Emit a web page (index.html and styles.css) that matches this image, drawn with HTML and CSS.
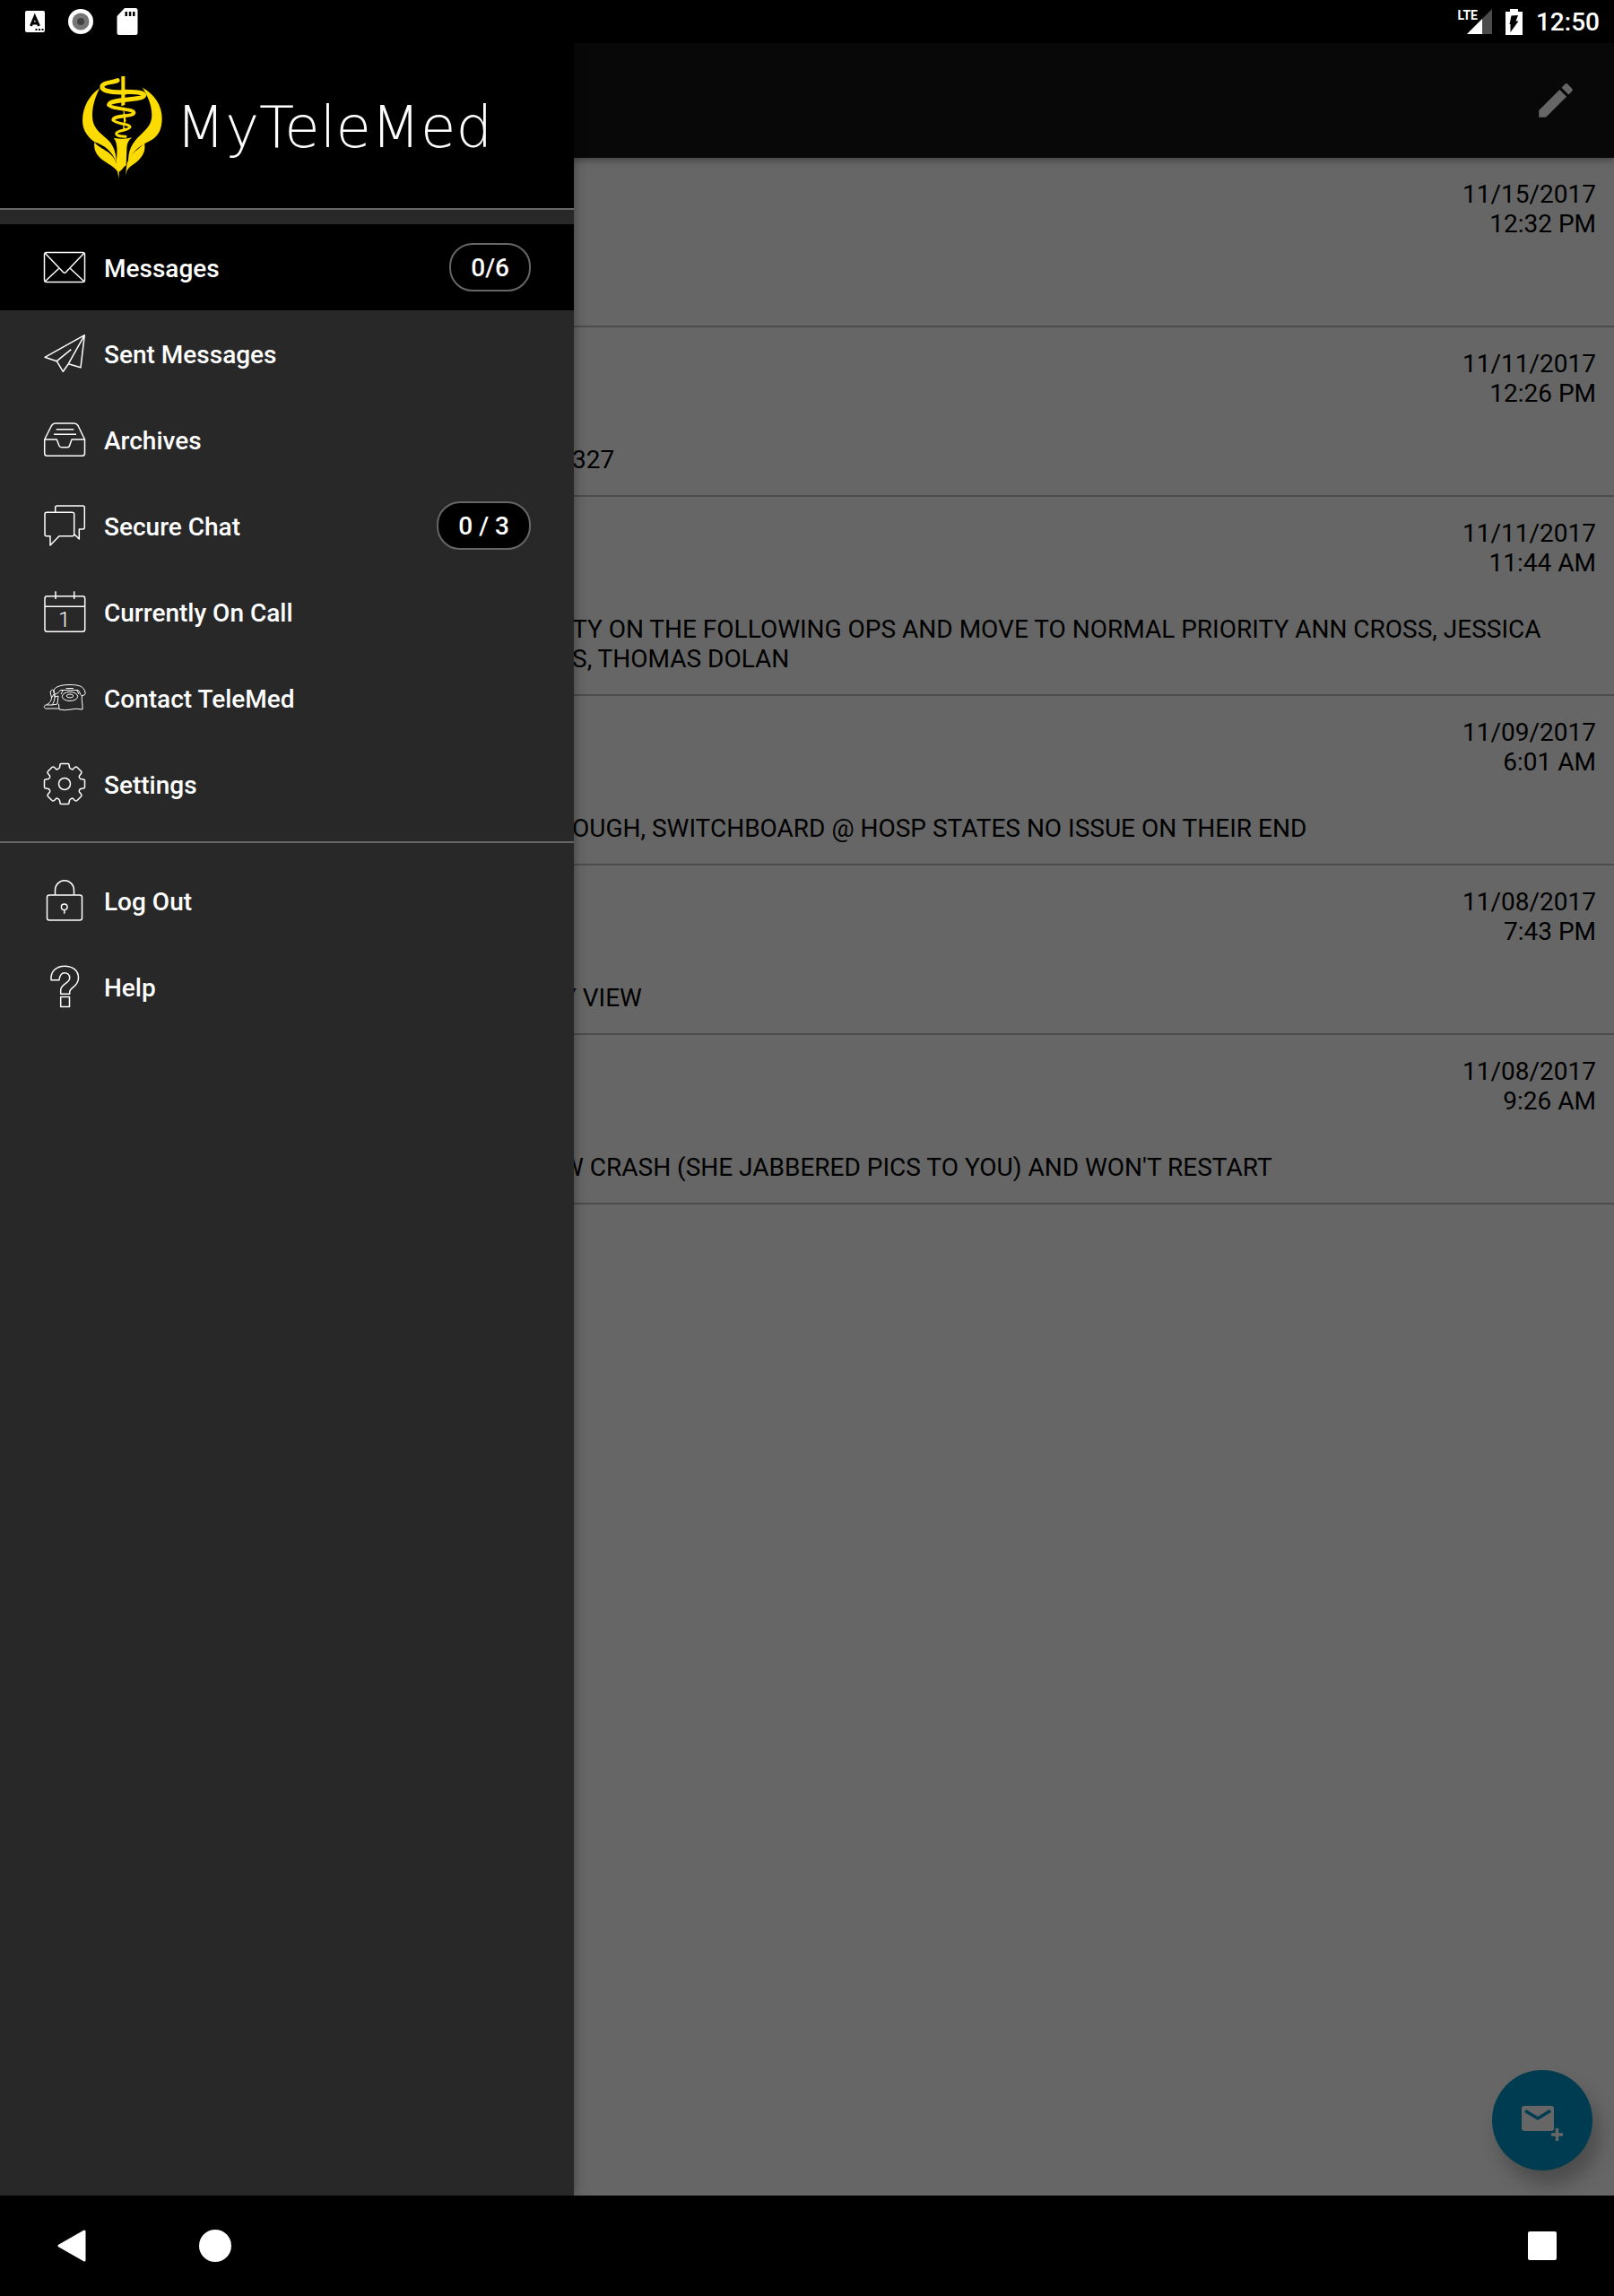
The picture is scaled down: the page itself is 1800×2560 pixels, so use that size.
FILE: index.html
```html
<!DOCTYPE html>
<html lang="en">
<head>
<meta charset="utf-8">
<meta name="viewport" content="width=device-width, initial-scale=1">
<title>MyTeleMed</title>
<link rel="stylesheet" href="styles.css">
</head>
<body>
<header class="status-bar">
  <div class="status-group status-notices">
    <svg width="22" height="24" viewBox="0 0 22 24" aria-hidden="true"><rect width="22" height="24" rx="2" fill="#fff"/><path d="M6.500 17L10.800 6.500L15.500 17M8 14H14" fill="none" stroke="#000" stroke-width="3"/><path d="M11.500 20h2v2h-2zM15 20h2v2h-2zM18.500 20h2v2h-2z"/></svg>
    <svg width="28" height="28" viewBox="0 0 28 28" aria-hidden="true"><circle cx="14" cy="14" r="14" fill="#fff"/><circle cx="14" cy="14" r="9.500" fill="#757575"/><circle cx="14" cy="14" r="4" fill="#424242"/></svg>
    <svg width="24" height="30" viewBox="0 0 24 30" aria-hidden="true"><path d="M9 0h12a2.500 2.500 0 0 1 2.500 2.500v25a2.500 2.500 0 0 1-2.500 2.500H3a2.500 2.500 0 0 1-2.500-2.500V9z" fill="#fff"/><path d="M9.500 4h2.500v5H9.500zM13.800 4h2.500v5h-2.500zM18 4h2.500v5H18z"/></svg>
  </div>
  <div class="status-group status-system">
    <div class="signal">
      <span class="network">LTE</span>
      <svg width="28" height="28" viewBox="0 0 28 28" aria-hidden="true"><path d="M0 28L28 0V28z" fill="#4c4c4c"/><path d="M0 28L17 11V28z" fill="#fff"/></svg>
    </div>
    <svg width="19" height="29" viewBox="0 0 19 29" aria-hidden="true"><path d="M5 0h9v3h5v26H0V3h5z" fill="#fff"/><path d="M6.500 7.500L14 7L11.500 13.500H14.500L5.500 26V17H4.500z"/></svg>
    <time class="clock">12:50</time>
  </div>
</header>

<div class="stage">
  <main class="content">
    <div class="app-bar">
      <button class="icon-button" type="button" aria-label="Edit">
        <svg width="50" height="50" viewBox="0 0 24 24" fill="#666" aria-hidden="true"><path d="M3 17.250V21h3.750L17.810 9.940l-3.750-3.750L3 17.250zM20.710 7.040a1 1 0 0 0 0-1.410l-2.340-2.340a1 1 0 0 0-1.410 0l-1.830 1.830 3.750 3.750 1.830-1.830z"/></svg>
      </button>
    </div>
    <ul class="message-list">
      <li class="message"><time class="when">11/15/2017<br>12:32 PM</time><p class="text"></p></li>
      <li class="message"><time class="when">11/11/2017<br>12:26 PM</time><p class="text">327</p></li>
      <li class="message"><time class="when">11/11/2017<br>11:44 AM</time><p class="text">TY ON THE FOLLOWING OPS AND MOVE TO NORMAL PRIORITY ANN CROSS, JESSICA<br>S, THOMAS DOLAN</p></li>
      <li class="message"><time class="when">11/09/2017<br>6:01 AM</time><p class="text">OUGH, SWITCHBOARD @ HOSP STATES NO ISSUE ON THEIR END</p></li>
      <li class="message"><time class="when">11/08/2017<br>7:43 PM</time><p class="text text-tucked">Y VIEW</p></li>
      <li class="message"><time class="when">11/08/2017<br>9:26 AM</time><p class="text text-tucked">W CRASH (SHE JABBERED PICS TO YOU) AND WON'T RESTART</p></li>
    </ul>
    <button class="fab" type="button" aria-label="New message">
      <svg width="48" height="48" viewBox="0 -8 48 48" aria-hidden="true"><rect x="1" width="36" height="28" rx="3" fill="#666"/><path d="M5 5.500L19 14L33 5.500" fill="none" stroke="#003c51" stroke-width="3.500"/><path d="M40.500 25v14M34 32h13" stroke="#666" stroke-width="3.500"/></svg>
    </button>
  </main>

  <aside class="drawer">
    <div class="brand">
      <svg class="brand-mark" width="92" height="118" viewBox="30 36 276 354" fill="#fcdb00" aria-hidden="true">
        <path d="M166 42h12v96l-12 4z"/>
        <path d="M172 142l10 50-8 10zM172 200l8 22-8 6z"/>
        <path d="M94 82C60 104 36 145 36 190C36 222 52 244 76 262C110 274 136 292 149 332C150 302 140 270 118 252C92 228 70 214 69 176C68 140 82 104 94 82z"/>
        <path d="M236 80C276 100 302 140 302 182C302 222 288 244 262 258C226 276 200 294 190 332C186 292 204 262 226 242C250 220 268 204 268 172C268 140 254 106 236 80z"/>
        <path d="M76 262C94 288 134 290 149 332L159 350L157 384L153 360C142 346 126 338 112 328C86 312 72 292 76 262z"/>
        <path d="M243 264C226 288 196 296 184 338L180 374L184 360C190 344 206 338 220 326C240 308 248 290 243 264z"/>
        <path d="M140 248C160 252 184 252 202 247C190 256 184 266 184 288L182 340C172 346 168 358 157 362L148 345C150 312 158 268 140 248z"/>
        <g fill="none" stroke="#fcdb00" stroke-linecap="round">
          <path d="M153 56C140 64 110 60 102 74C96 96 150 96 180 96" stroke-width="15"/>
          <path d="M170 94C210 94 242 96 242 106C240 122 128 118 125 137" stroke-width="15"/>
          <path d="M125 137C126 152 206 150 208 164C206 178 142 172 139 188" stroke-width="12"/>
          <path d="M139 188C142 202 194 200 195 212C192 224 150 222 149 234C150 244 166 242 180 244" stroke-width="9"/>
        </g>
      </svg>
      <h1 class="brand-name">MyTeleMed</h1>
    </div>
    <nav class="menu">
      <a class="menu-item is-active" href="#messages">
        <svg class="menu-icon" viewBox="0 0 48 48" aria-hidden="true"><rect x="1.500" y="7.500" width="45" height="33" rx="2.500"/><path d="M2.500 8.500L22.500 29.500Q24 31 25.500 29.500L45.500 8.500M2.500 39.500L17.500 25.500M45.500 39.500L30.500 25.500"/></svg>
        <span class="menu-label">Messages</span><span class="badge">0/6</span>
      </a>
      <a class="menu-item" href="#sent">
        <svg class="menu-icon" viewBox="0 0 48 48" aria-hidden="true"><path d="M46.300 3.700L2 28.300L15.300 32.700L22.300 44.300L28.300 35.700L42 39.700zM15.300 32.700L31.300 19.700M46.300 3.700L28.300 35.700"/></svg>
        <span class="menu-label">Sent Messages</span>
      </a>
      <a class="menu-item" href="#archives">
        <svg class="menu-icon" viewBox="0 0 48 48" aria-hidden="true"><path d="M1.700 24L9.500 8.500Q11 6 13.700 6H34.500Q37.500 6 39 8.500L46.500 24V39.500Q46.500 42.300 43.500 42.300H4.700Q1.700 42.300 1.700 39.500zM1.700 24H15.300L18 31Q18.700 32.700 20.500 32.700H27.500Q29 32.700 29.500 31L32 24H46.500M14.700 12.700H34.300M12 18.300H37"/></svg>
        <span class="menu-label">Archives</span>
      </a>
      <a class="menu-item" href="#chat">
        <svg class="menu-icon" viewBox="0 0 48 48" aria-hidden="true"><path d="M4 9.300H32.700Q34.700 9.300 34.700 11.300V33.700Q34.700 35.700 32.700 35.700H18L8 46V35.700H4Q2 35.700 2 33.700V11.300Q2 9.300 4 9.300zM13.700 9.300V4Q13.700 2 15.700 2H44.300Q46.300 2 46.300 4V26Q46.300 28 44.300 28H40.300V39L34.700 33.500"/></svg>
        <span class="menu-label">Secure Chat</span><span class="badge">0 / 3</span>
      </a>
      <a class="menu-item" href="#on-call">
        <svg class="menu-icon" viewBox="0 0 48 48" aria-hidden="true"><rect x="2" y="6.700" width="44.700" height="39.600" rx="2.500"/><path d="M2 18.300H46.700M14 1.300V10M34.700 1.300V10"/><text class="icon-digit" x="17" y="41">1</text></svg>
        <span class="menu-label">Currently On Call</span>
      </a>
      <a class="menu-item" href="#contact">
        <svg class="menu-icon menu-icon-fine" viewBox="0 0 48 48" aria-hidden="true"><path d="M12 16C13 11 22 9.500 30 9.500C39 9.500 46 11 47 18C47.500 20.500 46 21.500 43.500 21.500C41 21.500 41.500 17 39 15.500H20C17.500 16 17.500 19.500 14.500 19.500C11.500 19.500 11.500 18 12 16zM43.500 21.500C42.500 27 44.500 31 44 37Q36 35.500 31 37Q24 38.500 18 37L17.500 31M13 20V23L17 22L16 31L10 32C13 28 14 23 12 16L10.500 15L8 17L9.500 24C9 29 6 31 2 32.500C0 34.500 2 36.500 5 36H17.500M9.500 24L12 20M10 32H4M20 20L22 16M38 16L40 20M25.500 13.500H34M24.500 15.500H35"/><ellipse cx="30" cy="22.500" rx="8.700" ry="5"/><ellipse cx="30" cy="22" rx="3.700" ry="2"/></svg>
        <span class="menu-label">Contact TeleMed</span>
      </a>
      <a class="menu-item" href="#settings">
        <svg class="menu-icon" viewBox="-24 -24 48 48" aria-hidden="true"><path d="M-4 -22.500H4Q5 -22.500 5 -21L5.500 -18.500Q6 -17 7.500 -16.500L9 -16L11.500 -18.500Q12.800 -19.500 14 -18.500L18.500 -14Q19.500 -12.800 18.500 -11.500L16.500 -9Q16 -8 16.500 -7Q17 -6 18 -5.500L21 -5Q22.500 -5 22.500 -4V4Q22.500 5 21 5L18 5.500Q17 6 16.500 7Q16 8 16.500 9L18.500 11.500Q19.500 12.800 18.500 14L14 18.500Q12.800 19.500 11.500 18.500L9 16L7.500 16.500Q6 17 5.500 18.500L5 21Q5 22.500 4 22.500H-4Q-5 22.500 -5 21L-5.500 18.500Q-6 17 -7.500 16.500L-9 16L-11.500 18.500Q-12.800 19.500 -14 18.500L-18.500 14Q-19.500 12.800 -18.500 11.500L-16.500 9Q-16 8 -16.500 7Q-17 6 -18 5.500L-21 5Q-22.500 5 -22.500 4V-4Q-22.500 -5 -21 -5L-18 -5.500Q-17 -6 -16.500 -7Q-16 -8 -16.500 -9L-18.500 -11.500Q-19.500 -12.800 -18.500 -14L-14 -18.500Q-12.800 -19.500 -11.500 -18.500L-9 -16L-7.500 -16.500Q-6 -17 -5.500 -18.500L-5 -21Q-5 -22.500 -4 -22.500z"/><circle r="6.500"/></svg>
        <span class="menu-label">Settings</span>
      </a>
    </nav>
    <nav class="menu">
      <a class="menu-item" href="#logout">
        <svg class="menu-icon" viewBox="0 0 48 48" aria-hidden="true"><rect x="4.500" y="18" width="39" height="28" rx="2.500"/><path d="M13.500 18V12.500A10.500 10.800 0 0 1 34.500 12.500V18M23.700 34.500V38.700"/><circle cx="23.700" cy="31.300" r="3.300"/></svg>
        <span class="menu-label">Log Out</span>
      </a>
      <a class="menu-item" href="#help">
        <svg class="menu-icon" viewBox="0 0 48 48" aria-hidden="true"><path d="M9 16.700C8 7 15 1.200 24 1.200C33 1.200 39.500 6 39.500 14.500C39.500 24 30 25 29.700 30V32.300H19.700V28C19.700 21 29.700 20.500 29.700 14.500C29.700 10.500 27 8.700 23.700 8.700C20 8.700 18.700 11.500 18 16.700zM19.700 35.500H29.500V46.500H19.700z"/></svg>
        <span class="menu-label">Help</span>
      </a>
    </nav>
  </aside>
</div>

<footer class="nav-bar">
  <button class="nav-button" type="button" aria-label="Back"><svg width="36" height="36" viewBox="0 0 36 36" aria-hidden="true"><path d="M4 18L32 2V34z" fill="#fff" stroke="#fff" stroke-width="3" stroke-linejoin="round"/></svg></button>
  <button class="nav-button" type="button" aria-label="Home"><svg width="36" height="36" viewBox="0 0 36 36" aria-hidden="true"><circle cx="18" cy="18" r="18" fill="#fff"/></svg></button>
  <button class="nav-button nav-end" type="button" aria-label="Recent apps"><svg width="32" height="32" viewBox="0 0 32 32" aria-hidden="true"><rect width="32" height="32" rx="2" fill="#fff"/></svg></button>
</footer>
</body>
</html>
```

FILE: styles.css
```css
* {
  box-sizing: border-box;
}

body {
  margin: 0;
  min-height: 100vh;
  display: flex;
  flex-direction: column;
  background: #000;
  color: #000;
  font: 400 28px/33px Roboto, sans-serif;
}

svg {
  display: block;
  flex: none;
}

button {
  margin: 0;
  padding: 0;
  border: 0;
  background: none;
  display: grid;
  place-items: center;
}

.status-bar {
  height: 48px;
  padding: 0 16px 0 28px;
  display: flex;
  align-items: center;
  justify-content: space-between;
  color: #fff;
}

.status-group {
  display: flex;
  align-items: center;
}

.status-notices {
  gap: 26px;
}

.status-system {
  gap: 15px;
}

.signal {
  display: flex;
}

.network {
  margin-right: -12px;
  font: 700 14px/14px "Liberation Sans Narrow", Roboto, sans-serif;
}

.clock {
  font-weight: 500;
}

.stage {
  flex: 1;
  position: relative;
  display: flex;
}

.content {
  flex: 1;
  min-width: 0;
  background: #666;
}

.app-bar {
  position: relative;
  height: 128px;
  padding: 0 40px;
  display: flex;
  align-items: center;
  justify-content: flex-end;
  background: #080808;
  box-shadow: 0 2px 8px rgba(0, 0, 0, 0.4);
}

.message-list {
  margin: 0;
  padding: 0;
  list-style: none;
}

.message {
  padding: 24px 20px 23px;
  display: flex;
  flex-direction: column;
  gap: 41px;
  border-bottom: 2px solid #4c4c4c;
}

.when {
  text-align: right;
}

.text {
  margin: 0;
  min-height: 33px;
  padding-left: 618px;
}

/* Lines whose first letter runs under the drawer edge */
.text-tucked {
  padding-left: 606px;
}

.fab {
  position: absolute;
  right: 24px;
  bottom: 28px;
  width: 112px;
  height: 112px;
  border-radius: 50%;
  background: #003c51;
  box-shadow: 8px 16px 20px rgba(0, 0, 0, 0.25);
}

.drawer {
  position: absolute;
  top: 0;
  bottom: 0;
  left: 0;
  width: 640px;
  background: #282828;
  color: #fff;
  box-shadow: 0 0 12px rgba(0, 0, 0, 0.4);
}

.brand {
  height: 186px;
  padding: 4px 0 0 90px;
  display: flex;
  align-items: center;
  gap: 14px;
  background: #000;
  border-bottom: 2px solid #666;
}

.brand-name {
  margin: 0;
  font: 200 64px/64px "DejaVu Sans", sans-serif;
}

.menu {
  padding: 16px 0;
}

.menu + .menu {
  border-top: 2px solid #666;
}

.menu-item {
  height: 96px;
  padding: 0 48px;
  display: flex;
  align-items: center;
  gap: 20px;
  color: inherit;
  font-weight: 500;
  text-decoration: none;
}

.is-active {
  background: #000;
}

.menu-icon {
  width: 48px;
  height: 48px;
  fill: none;
  stroke: #fff;
  stroke-width: 1.5;
  stroke-linejoin: round;
}

.menu-icon-fine {
  stroke-width: 1;
}

.menu-label {
  padding-top: 2px;
}

.icon-digit {
  fill: #fff;
  stroke: none;
  font: 300 24px Roboto, sans-serif;
}

.badge {
  margin-left: auto;
  height: 54px;
  padding: 1px 22px 0;
  border: 2px solid #666;
  border-radius: 26px;
  background: #000;
  line-height: 50px;
}

.nav-bar {
  height: 112px;
  display: flex;
}

.nav-button {
  width: 160px;
  height: 112px;
}

.nav-end {
  margin-left: auto;
}
```
